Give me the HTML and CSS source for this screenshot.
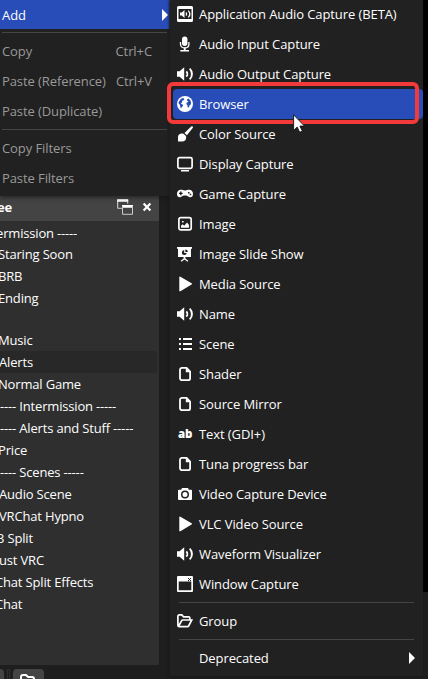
FILE: index.html
```html
<!DOCTYPE html>
<html lang="en">
<head>
<meta charset="utf-8">
<title>Add source</title>
<link rel="stylesheet" href="styles.css">
</head>
<body>
<svg class="defs" width="0" height="0">
  <symbol id="speaker" viewBox="0 0 16 16"><path d="M0 5.3h2.6L7.2 1.2v13.6L2.6 10.7H0z"/><path class="line" d="M9.3 5.3c1.4 1.5 1.4 3.9 0 5.4M12.7 2.6c3 3 3 7.8 0 10.8" stroke-width="1.9"/></symbol>
  <symbol id="file" viewBox="0 0 16 16"><path class="line" d="M5 1.9h4.6l3.5 3.6v6.7a2 2 0 0 1-2 2H5a2 2 0 0 1-2-2V3.9a2 2 0 0 1 2-2z" stroke-width="1.8"/><path d="M8.8 1.5v4.8h4.6z"/></symbol>
  <symbol id="play" viewBox="0 0 16 16"><path d="M2.3 1.2c0-.6.6-.8 1.1-.5l11.2 6.6c.5.3.5.9 0 1.2L3.4 15.2c-.5.3-1.1 0-1.1-.5z"/></symbol>
</svg>
<div class="screen">
  <section class="dock">
    <header class="dock-title"><b>ee</b>
      <svg class="float" viewBox="0 0 16 16"><path d="M.7 9.3V.7h10v4" fill="none" stroke="#ddd"/><path d="M.2.2h11v2.6H.2zM5 6h11v2.8H5z" fill="#fff"/><path d="M.7 9.3H5M5.5 7v8.3h10V7" fill="none" stroke="#ccc"/></svg>
      <svg class="close" viewBox="0 0 10 10"><path d="M1.6 1.4l6.8 7.2M8.4 1.4L1.6 8.6" stroke="#fff" stroke-width="2.2"/></svg>
    </header>
    <ul class="scenes">
      <li class="first">ermission -----</li>
      <li class="cut1">Staring Soon</li>
      <li class="cut2">BRB</li>
      <li class="cut2">Ending</li>
      <li class="blank"></li>
      <li class="cut2">Music</li>
      <li class="current">Alerts</li>
      <li class="cut2">Normal Game</li>
      <li class="dashes">----- Intermission -----</li>
      <li class="dashes">----- Alerts and Stuff -----</li>
      <li class="cut2">Price</li>
      <li class="dashes">----- Scenes -----</li>
      <li>Audio Scene</li>
      <li>VRChat Hypno</li>
      <li class="cut3">3 Split</li>
      <li>ust VRC</li>
      <li class="cut4">Chat Split Effects</li>
      <li class="cut4">Chat</li>
    </ul>
    <footer class="tools"><i class="btn-end"></i><i class="divider"></i><span class="btn"><svg viewBox="0 0 16 16"><path d="M1 14V4a2 2 0 0 1 2-2h3l2 2h4a2 2 0 0 1 2 2v1" fill="none" stroke="#fff" stroke-width="2"/></svg></span></footer>
  </section>
  <div class="backdrop"></div>

  <nav class="menu context">
    <div class="item active"><span>Add</span><i class="arrow"></i></div>
    <hr>
    <div class="item"><span>Copy</span><kbd>Ctrl+C</kbd></div>
    <div class="item"><span>Paste (Reference)</span><kbd>Ctrl+V</kbd></div>
    <div class="item"><span>Paste (Duplicate)</span></div>
    <hr>
    <div class="item"><span>Copy Filters</span></div>
    <div class="item"><span>Paste Filters</span></div>
  </nav>

  <nav class="menu sources">
    <div class="item"><svg viewBox="0 0 16 16"><path fill-rule="evenodd" d="M1.5 0h13A1.5 1.5 0 0 1 16 1.5v13a1.5 1.5 0 0 1-1.5 1.5h-13A1.5 1.5 0 0 1 0 14.500v-13A1.500 1.500 0 0 1 1.500 0zM1.500 3v10h13V3z"/><path d="M3 6.500h1.800L7.500 4v8L4.800 9.500H3z"/><path class="line" d="M9 6.300c.8 1 .8 2.400 0 3.400M11.300 4.600c1.800 2 1.800 4.800 0 6.800" stroke-width="1.300"/></svg><span>Application Audio Capture (BETA)</span></div>
    <div class="item"><svg viewBox="0 0 16 16"><rect x="5" y=".5" width="5.400" height="9.500" rx="2.700"/><path class="line" d="M3.500 6v2.200c0 5 8.400 5 8.400 0V6" stroke-width="1.300"/><path d="M6.800 11.500h1.900V14H12v1.600H3.300V14h3.500z"/></svg><span>Audio Input Capture</span></div>
    <div class="item"><svg><use href="#speaker"/></svg><span>Audio Output Capture</span></div>
    <div class="item active"><svg viewBox="0 0 16 16"><circle cx="8" cy="8" r="8"/><path fill="#284cb8" d="M2 5.500l2-2.700 2.200-.9 1.200 1-.9 1.300-1.500.7.3 1.400-1.600 1.100 1.900 1 .5 1.400-1.500 1.400-.6 1.400-.8-1.800-.2-1.900-1.600-2zM10 3.500l1.500-1 1.700 1.700.9 2.300-.3 1.900-1.100.5-.7 2.300-1.200.3-.5-2.500-1-1 .5-1.500 1.400-.5-.2-1.200-1 .1z"/></svg><span>Browser</span></div>
    <div class="item"><svg viewBox="0 0 16 16"><path d="M14.200.6c1.100-.8 2.300.5 1.500 1.500L9.900 9.200 7.500 6.900zM6.500 7.700l2.500 2.400c.7 3.200-1 5.400-4 5.400H1V11c0-2.800 2.700-4.300 5.500-3.300z"/></svg><span>Color Source</span></div>
    <div class="item"><svg viewBox="0 0 16 16"><rect class="line" x=".9" y="1.700" width="14.200" height="10.700" rx="1.600" stroke-width="1.700"/><path d="M4 14h8v1.500H4z"/></svg><span>Display Capture</span></div>
    <div class="item"><svg viewBox="0 0 16 16"><path fill-rule="evenodd" d="M4 3.800c1.500 0 2 .7 4 .7s2.500-.7 4-.7c2.600 0 4 1.700 4 4.200 0 2.300-1.200 3.300-2.700 3.300-1.800 0-2-1.800-5.300-1.800s-3.500 1.800-5.300 1.800C1.200 11.300 0 10.300 0 8c0-2.500 1.400-4.200 4-4.200zM3.100 5.600v1.100H2v1.400h1.100v1.100h1.400V8.100h1.100V6.700H4.500V5.600zM11 6v1.500h1.500V6zm1.700 1.700v1.500h1.500V7.700z"/></svg><span>Game Capture</span></div>
    <div class="item"><svg viewBox="0 0 16 16"><rect class="line" x="1.900" y="1.600" width="12.300" height="12.300" rx="1.800" stroke-width="1.700"/><path d="M4 11.800V9.700l1.700-1.500 1.500 1.500L10 6.500l2 2.400v2.900zM5 5h1.600v1.600H5z"/></svg><span>Image</span></div>
    <div class="item"><svg viewBox="0 0 16 16"><path fill-rule="evenodd" d="M0 1h15v1.700h-1V11H8.400v1.400l2.900 2.400-.8.900-3-2.300-3 2.300-.8-.9 2.900-2.400V11H1V2.700H0zM7.200 4.100a2.500 2.500 0 1 0 2.600 3H7.200zM8.300 3.400v2.500h2.500a2.500 2.500 0 0 0-2.500-2.500z"/></svg><span>Image Slide Show</span></div>
    <div class="item"><svg><use href="#play"/></svg><span>Media Source</span></div>
    <div class="item"><svg><use href="#speaker"/></svg><span>Name</span></div>
    <div class="item"><svg viewBox="0 0 16 16"><path d="M2 2h2v2H2zM6 2h9v2H6zM2 7h2v2H2zM6 7h9v2H6zM2 12h2v2H2zM6 12h9v2H6z"/></svg><span>Scene</span></div>
    <div class="item"><svg><use href="#file"/></svg><span>Shader</span></div>
    <div class="item"><svg><use href="#file"/></svg><span>Source Mirror</span></div>
    <div class="item"><b class="ab">ab</b><span>Text (GDI+)</span></div>
    <div class="item"><svg><use href="#file"/></svg><span>Tuna progress bar</span></div>
    <div class="item"><svg viewBox="0 0 16 16"><path fill-rule="evenodd" d="M5 2h6l.8 1.700H14a1 1 0 0 1 1 1V13a1 1 0 0 1-1 1H2a1 1 0 0 1-1-1V4.700a1 1 0 0 1 1-1h2.200zM8 4.500a4 4 0 1 0 0 8 4 4 0 0 0 0-8zm0 1.500a2.500 2.500 0 1 1 0 5 2.500 2.500 0 0 1 0-5z"/><circle cx="8" cy="8.500" r="1"/></svg><span>Video Capture Device</span></div>
    <div class="item"><svg><use href="#play"/></svg><span>VLC Video Source</span></div>
    <div class="item"><svg><use href="#speaker"/></svg><span>Waveform Visualizer</span></div>
    <div class="item"><svg viewBox="0 0 16 16"><path fill-rule="evenodd" d="M1 0h14a1 1 0 0 1 1 1v14a1 1 0 0 1-1 1H1a1 1 0 0 1-1-1V1a1 1 0 0 1 1-1zM1.700 5.500v8.800h12.600V5.500z"/><path d="M11 2l3 3M14 2l-3 3" stroke="#1f1f1f" stroke-width="1"/></svg><span>Window Capture</span></div>
    <hr>
    <div class="item"><svg viewBox="0 0 16 16"><path class="line" d="M3.500 13.700H2.300a1.500 1.500 0 0 1-1.400-1.500V3.300c0-.8.500-1.400 1.400-1.400h2.500l1.800 1.900h4.900c.9 0 1.400.6 1.400 1.400v1.300M1.500 13.200l3.200-5.500c.2-.4.6-.7 1-.7h9.100l-3.200 6c-.3.500-.7.700-1.200.7H2" stroke-width="1.700"/></svg><span>Group</span></div>
    <hr>
    <div class="item"><i class="no-icon"></i><span>Deprecated</span><i class="arrow"></i></div>
  </nav>

  <div class="highlight"></div>
  <svg class="cursor" viewBox="0 0 12 19"><path d="M.6.8v15.700l3.600-3.400 2.500 5.200 2.700-1.200-2.500-5h4.600z" fill="#fff" stroke="#111" stroke-width=".9"/></svg>
</div>
</body>
</html>
```
FILE: styles.css
```css
* { box-sizing: border-box; }
body { margin: 0; background: #1e1e1e; }
.defs { position: absolute; }
.screen {
  position: relative;
  display: flex;
  justify-content: space-between;
  width: 428px;
  height: 679px;
  overflow: hidden;
  background: #1e1e1e;
  color: #fefefe;
  font: 13px/22px "Open Sans", "Noto Sans", sans-serif;
  letter-spacing: -0.09px;
  white-space: nowrap;
}
svg { flex: none; fill: #fefefe; }
.line { fill: none; stroke: #fefefe; }

.dock {
  display: flex;
  flex-direction: column;
  width: 159px;
  padding-top: 192px;
}
.dock-title {
  display: flex;
  align-items: center;
  height: 29px;
  padding: 0 7px 0 0;
  background: #444;
}
.dock-title b { margin-left: -3px; }
.float { width: 16px; height: 16px; margin-left: auto; }
.close { width: 10px; height: 10px; margin-left: 9px; }
.scenes {
  flex: 1;
  margin: 0;
  padding: 1px 2px 0 0;
  list-style: none;
  background: #2f2f2f;
  letter-spacing: -0.17px;
}
.scenes li { height: 22px; text-indent: -1px; }
.scenes .first { height: 21px; text-indent: -4px; }
.scenes .blank { height: 20px; }
.scenes .cut1 { text-indent: -2px; }
.scenes .cut2 { text-indent: -2px; }
.scenes .cut3 { text-indent: -3px; }
.scenes .cut4 { text-indent: -5px; }
.scenes .dashes { text-indent: -4px; }
.scenes .current { background: #282828; border-radius: 0 3px 3px 0; }
.tools { display: flex; height: 14px; padding-top: 4px; overflow: hidden; }
.btn-end { width: 4px; height: 20px; background: #444; border-radius: 0 4px 0 0; }
.divider { width: 3px; height: 12px; margin: 0 3px; border: 1px solid #303030; }
.btn { width: 31px; height: 24px; padding: 4px 7px; background: #444; border-radius: 4px; }
.btn svg { display: block; width: 16px; height: 16px; }
.backdrop { width: 5px; height: 592px; background: #000; }

.menu { position: absolute; background: #212121; }
.menu hr { height: 1px; border: 0; background: #454545; }
.item { display: flex; align-items: center; height: 30px; }
.arrow {
  margin-left: auto;
  border: solid transparent;
  border-width: 6px 0 6px 6px;
  border-left-color: #fefefe;
}

.context { top: 0; left: 0; width: 170px; height: 196px; color: #999; box-shadow: 0 2px 4px #1118; }
.context .item { padding-left: 2px; }
.context .item.active { height: 29px; padding-right: 2px; color: #fefefe; background: #284cb8; }
.context hr { margin: 3px 3px 3px 2px; }
.context kbd { margin-left: auto; padding-right: 18px; font: inherit; }

.sources { top: -1px; left: 170px; width: 253px; height: 677px; box-shadow: -1px 1px 2px #1a1a1a; }
.sources .item { padding-left: 7px; }
.sources .item > svg { width: 16px; height: 16px; margin-right: 6px; }
.sources .item.active { margin-left: 3px; padding-left: 4px; background: #284cb8; border-radius: 4px; }
.sources hr { margin: 3px 9px 3px 9px; }
.sources .arrow { margin-right: 8px; }
.no-icon { width: 22px; }
.ab { width: 22px; padding-left: 1px; font: 800 11.500px/16px "Open Sans", sans-serif; }

.highlight {
  position: absolute;
  top: 82px;
  left: 167px;
  width: 252px;
  height: 42px;
  border: 4px solid #f23a3a;
  border-radius: 6px;
}
.cursor { position: absolute; top: 114px; left: 293px; width: 12px; height: 19px; }
```
